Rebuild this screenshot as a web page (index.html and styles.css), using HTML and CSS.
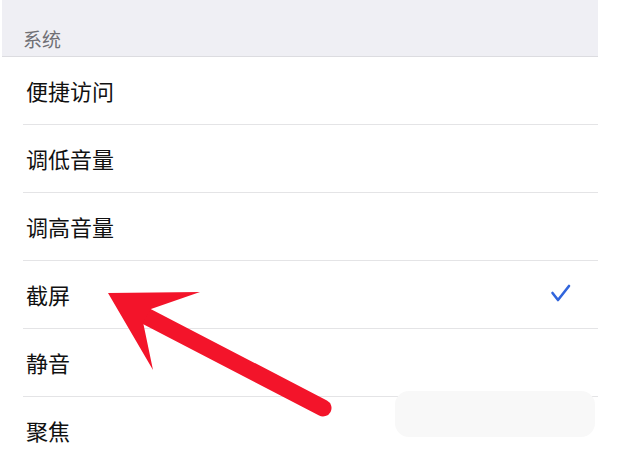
FILE: index.html
```html
<!DOCTYPE html>
<html>
<head>
    <meta charset="UTF-8">
    <title>系统</title>
    <link rel="stylesheet" href="styles.css">
</head>
<body>
    <div class="page">
        <div class="group-header">系统</div>
        <ul class="options">
            <li class="option">便捷访问</li>
            <li class="option">调低音量</li>
            <li class="option">调高音量</li>
            <li class="option">截屏
                <svg class="check" width="22" height="22" viewBox="0 0 22 22">
                    <path d="M2.5 10 L8 17 L19 3" fill="none" stroke="#3165dc" stroke-width="2.6" stroke-linecap="round" stroke-linejoin="round"/>
                </svg>
            </li>
            <li class="option">静音</li>
            <li class="option">聚焦</li>
        </ul>
        <div class="smudge"></div>
    </div>
    <svg class="pointer" width="630" height="451" viewBox="0 0 630 451">
        <line x1="140" y1="313" x2="323" y2="408" stroke="#f3142a" stroke-width="17" stroke-linecap="round"/>
        <polygon points="108,293 200,292 151,309 143,322 153,370" fill="#f3142a"/>
    </svg>
</body>
</html>
```

FILE: styles.css
```css
body {
    margin: 0;
    background: #fff;
    font-family: "Noto Sans CJK SC", "Noto Sans", sans-serif;
    overflow: hidden;
}

.page {
    position: relative;
    width: 596px;
    margin-left: 2px;
    height: 451px;
    overflow: hidden;
}

.group-header {
    height: 57px;
    border-bottom: 1px solid #dcdce0;
    background: #efeff4;
    color: #707075;
    font-size: 19px;
    line-height: 19px;
    padding-left: 21px;
    box-sizing: border-box;
    padding-top: 29px;
}

.options {
    list-style: none;
    margin: 0;
    padding: 0;
}

.option {
    display: flex;
    align-items: center;
    justify-content: space-between;
    height: 67px;
    margin-left: 21px;
    padding-left: 3px;
    padding-right: 26px;
    padding-bottom: 2px;
    box-sizing: border-box;
    height: 68px;
    border-bottom: 1px solid #e4e4e6;
    font-size: 22px;
    color: #111;
}

.check {
    margin-top: 0;
}

.smudge {
    position: absolute;
    left: 393px;
    top: 391px;
    width: 200px;
    height: 46px;
    border-radius: 14px;
    background: #f8f8f8;
}

.pointer {
    position: absolute;
    left: 0;
    top: 0;
}
```
